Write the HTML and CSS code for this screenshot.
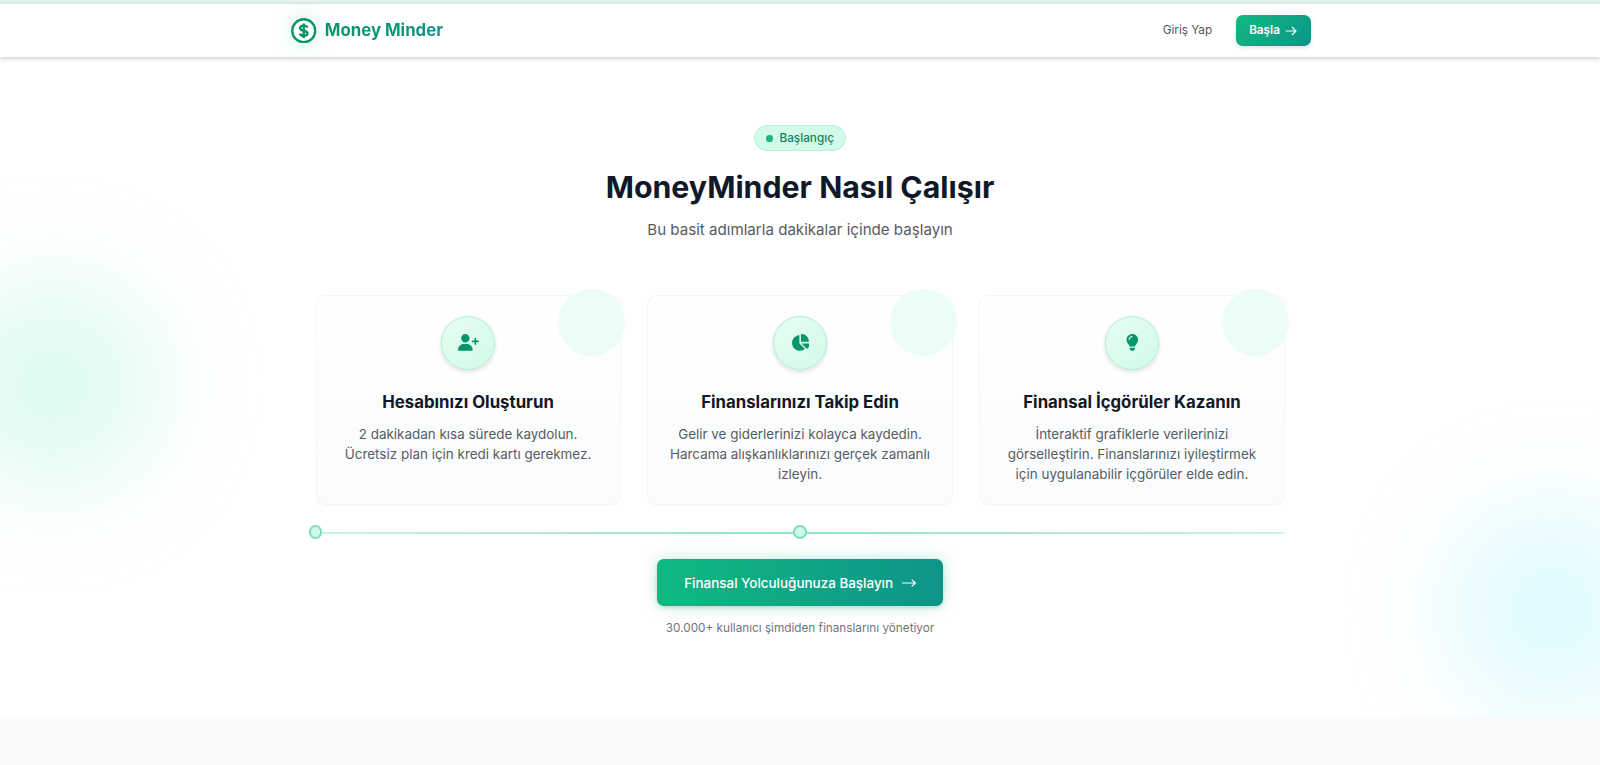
FILE: index.html
```html
<!DOCTYPE html>
<html lang="tr">
<head>
    <meta charset="UTF-8">
    <meta name="viewport" content="width=device-width, initial-scale=1.0">
    <title>Money Minder</title>
    <link rel="stylesheet" href="styles.css">
</head>
<body>
    <div class="top-strip"></div>
    <header class="header">
        <div class="nav">
            <a class="logo" href="#">
                <span class="logo-icon">
                    <svg viewBox="0 0 24 24" fill="none" stroke="currentColor">
                        <circle cx="12" cy="12" r="10.8" stroke-width="2.2"/>
                        <path d="M15.4 9.1c-.4-1.2-1.7-1.9-3.4-1.9-2 0-3.4.9-3.4 2.4 0 3.3 6.9 1.5 6.9 4.8 0 1.5-1.5 2.4-3.5 2.4-1.8 0-3.2-.8-3.6-2.1M12 5.2v13.6" stroke-width="2.3"/>
                    </svg>
                </span>
                <span class="logo-text">Money Minder</span>
            </a>
            <div class="nav-actions">
                <a class="login-link" href="#">Giriş Yap</a>
                <a class="start-button" href="#">Başla
                    <svg viewBox="0 0 14 12" fill="none" stroke="currentColor" stroke-width="1.3" stroke-linecap="round" stroke-linejoin="round"><path d="M1 6h12M8.5 1.5L13 6l-4.5 4.5"/></svg>
                </a>
            </div>
        </div>
    </header>

    <section class="how-section">
        <div class="blob blob-left"></div>
        <div class="blob blob-right"></div>

        <div class="container">
            <span class="badge"><span class="badge-dot"></span>Başlangıç</span>
            <h2>MoneyMinder Nasıl Çalışır</h2>
            <p class="subtitle">Bu basit adımlarla dakikalar içinde başlayın</p>

            <div class="cards">
                <div class="card">
                    <div class="card-icon">
                        <svg viewBox="0 0 640 512"><path d="M96 128a128 128 0 1 1 256 0A128 128 0 1 1 96 128zM0 482.3C0 383.8 79.8 304 178.3 304h91.4C368.2 304 448 383.8 448 482.3c0 16.4-13.3 29.7-29.7 29.7H29.7C13.3 512 0 498.7 0 482.3zM504 312V248H440c-13.3 0-24-10.7-24-24s10.7-24 24-24h64V136c0-13.3 10.7-24 24-24s24 10.7 24 24v64h64c13.3 0 24 10.7 24 24s-10.7 24-24 24H552v64c0 13.3-10.7 24-24 24s-24-10.7-24-24z"/></svg>
                    </div>
                    <h3>Hesabınızı Oluşturun</h3>
                    <p>2 dakikadan kısa sürede kaydolun. Ücretsiz plan için kredi kartı gerekmez.</p>
                </div>
                <div class="card">
                    <div class="card-icon">
                        <svg viewBox="0 0 576 512"><path d="M304 240V16.6c0-9 7-16.6 16-16.6C443.7 0 544 100.3 544 224c0 9-7.6 16-16.6 16H304zM32 272C32 150.7 122.1 50.3 239 34.3c9.2-1.3 17 6.1 17 15.4V288L412.5 444.5c6.7 6.7 6.2 17.7-1.5 23.1C371.8 495.6 323.8 512 272 512C139.5 512 32 404.6 32 272zm526.4 16c9.3 0 16.6 7.8 15.4 17c-7.7 55.9-34.6 105.6-73.9 142.3c-6 5.6-15.4 5.2-21.2-.7L320 288H558.4z"/></svg>
                    </div>
                    <h3>Finanslarınızı Takip Edin</h3>
                    <p>Gelir ve giderlerinizi kolayca kaydedin. Harcama alışkanlıklarınızı gerçek zamanlı izleyin.</p>
                </div>
                <div class="card">
                    <div class="card-icon">
                        <svg viewBox="0 0 384 512"><path d="M272 384c9.6-31.9 29.5-59.1 49.2-86.2l0 0c5.2-7.1 10.4-14.2 15.4-21.4c19.8-28.5 31.4-63 31.4-100.3C368 78.8 289.2 0 192 0S16 78.8 16 176c0 37.3 11.6 71.9 31.4 100.3c5 7.2 10.2 14.3 15.4 21.4l0 0c19.8 27.1 39.7 54.4 49.2 86.2H272zM192 512c44.2 0 80-35.8 80-80V416H112v16c0 44.2 35.8 80 80 80zM112 176c0 8.8-7.2 16-16 16s-16-7.2-16-16c0-61.9 50.1-112 112-112c8.8 0 16 7.2 16 16s-7.2 16-16 16c-44.2 0-80 35.8-80 80z"/></svg>
                    </div>
                    <h3>Finansal İçgörüler Kazanın</h3>
                    <p>İnteraktif grafiklerle verilerinizi görselleştirin. Finanslarınızı iyileştirmek için uygulanabilir içgörüler elde edin.</p>
                </div>
            </div>

            <div class="timeline">
                <span class="timeline-dot"></span>
                <span class="timeline-dot timeline-dot-middle"></span>
            </div>

            <a class="cta-button" href="#">Finansal Yolculuğunuza Başlayın
                <svg viewBox="0 0 14 10" fill="none" stroke="currentColor" stroke-width="1.1" stroke-linecap="round" stroke-linejoin="round"><path d="M.6 5h12.8M10 1.8L13.4 5 10 8.2"/></svg>
            </a>
            <p class="cta-note">30.000+ kullanıcı şimdiden finanslarını yönetiyor</p>
        </div>
    </section>
</body>
</html>
```

FILE: styles.css
```css
* {
    box-sizing: border-box;
    margin: 0;
    padding: 0;
}
html {
    font-size: 13.44px;
}
body {
    font-family: Inter, "Noto Sans", sans-serif;
    line-height: 1.5;
    color: #111827;
    background-color: #f9fafc;
    height: 100vh;
    overflow: hidden;
}
a {
    color: inherit;
    text-decoration: none;
}
.top-strip {
    height: 4px;
    background-color: #e6f7f1;
}
.header {
    position: relative;
    z-index: 2;
    height: 53px;
    background-color: white;
    box-shadow: 0 1px 5px rgba(0, 0, 0, 0.24);
}
.nav {
    max-width: 76rem;
    height: 100%;
    margin: 0 auto;
    display: flex;
    justify-content: space-between;
    align-items: center;
}
.logo {
    display: flex;
    align-items: center;
    gap: 0.6rem;
    padding-left: 2px;
}
.logo-icon {
    display: flex;
    color: #059669;
    border-radius: 50%;
    box-shadow: 0 0 18px 5px rgba(16, 185, 129, 0.1);
}
.logo-icon svg {
    width: 25.5px;
    height: 25.5px;
}
.logo-text {
    font-size: 1.25rem;
    font-weight: 700;
    padding-top: 1px;
    background: linear-gradient(90deg, #059669, #0d9488);
    -webkit-background-clip: text;
    background-clip: text;
    color: transparent;
}
.nav-actions {
    display: flex;
    align-items: center;
    gap: 1.75rem;
    font-size: 0.875rem;
}
.login-link {
    color: #4f565f;
    padding-top: 1px;
}
.start-button {
    display: flex;
    align-items: center;
    gap: 0.4rem;
    height: 2.3rem;
    padding: 1px 1rem 0;
    color: white;
    font-weight: 600;
    border-radius: 0.5rem;
    background: linear-gradient(135deg, #10b981, #0d9488);
    box-shadow: 0 2px 4px rgba(0, 0, 0, 0.12);
}
.start-button svg {
    width: 12px;
    height: 10px;
}
.how-section {
    position: relative;
    overflow: hidden;
    padding: 68px 0 6rem;
    background-color: white;
}
.blob {
    position: absolute;
    width: 16rem;
    height: 16rem;
    border-radius: 50%;
    filter: blur(50px);
}
.blob-left {
    top: 33.33%;
    left: -4rem;
    background-color: #a2f2da;
    opacity: 0.35;
}
.blob-right {
    right: -4.5rem;
    bottom: 0;
    background-color: #a5f3fc;
    opacity: 0.34;
}
.container {
    position: relative;
    max-width: 969px;
    margin: 0 auto;
    display: flex;
    flex-direction: column;
    align-items: center;
    text-align: center;
}
.badge {
    display: flex;
    align-items: center;
    gap: 0.5rem;
    height: 26px;
    padding: 1px 0.8rem 0;
    margin-bottom: 1.5rem;
    font-size: 0.875rem;
    font-weight: 500;
    color: #17805f;
    background-color: #d1fae9;
    border: 1px solid #b4f1da;
    border-radius: 999px;
}
.badge-dot {
    width: 0.5rem;
    height: 0.5rem;
    border-radius: 50%;
    background-color: #17b981;
}
h2 {
    font-size: 2.255rem;
    line-height: 2.5rem;
    font-weight: 700;
    margin-bottom: 1rem;
}
.subtitle {
    font-size: 1.125rem;
    line-height: 1.75rem;
    color: #555c64;
    margin-bottom: 53px;
}
.cards {
    width: 100%;
    display: grid;
    grid-template-columns: repeat(3, 1fr);
    gap: 2rem;
}
.card {
    position: relative;
    padding: 1.5rem;
    border: 1px solid #f3f5f6;
    border-radius: 0.75rem;
    background: linear-gradient(to bottom, white, #f9fbfc);
    box-shadow: 0 1px 2px rgba(0, 0, 0, 0.03);
}
/* pale circle over the top right corner */
.card::after {
    content: "";
    position: absolute;
    top: -0.5rem;
    right: -0.4rem;
    width: 5rem;
    height: 5rem;
    border-radius: 50%;
    background-color: #ebfdf5;
}
.card-icon {
    width: 4rem;
    height: 4rem;
    margin: 0 auto 21px;
    display: flex;
    justify-content: center;
    align-items: center;
    border: 1px solid #b0eed5;
    border-radius: 50%;
    background: linear-gradient(135deg, #e8fdf4, #d1fae7);
    box-shadow: 0 2px 4px rgba(0, 0, 0, 0.12);
}
.card-icon svg {
    height: 1.25rem;
    fill: #059669;
}
h3 {
    font-size: 1.25rem;
    line-height: 1.75rem;
    font-weight: 700;
    margin-bottom: 0.72rem;
}
.card p {
    font-size: 1rem;
    color: #555c64;
}
.timeline {
    position: relative;
    width: 100%;
    height: 2px;
    margin: 1.95rem 0 1.9rem;
    background: linear-gradient(to right, #c9f5e2, #93e2c2, #c9f5e2);
}
.timeline-dot {
    position: absolute;
    top: -6.5px;
    left: 0;
    width: 1rem;
    height: 1rem;
    margin-left: -0.5rem;
    border: 2px solid #7fdfb9;
    border-radius: 50%;
    background-color: #cdf9e5;
}
.timeline-dot-middle {
    left: 50%;
}
.cta-button {
    display: flex;
    align-items: center;
    gap: 0.65rem;
    height: 3.5rem;
    padding: 0 2rem;
    margin-bottom: 1rem;
    color: white;
    font-size: 1rem;
    font-weight: 500;
    border-radius: 0.5rem;
    background: linear-gradient(to right, #10b981, #0d9488);
    box-shadow: 0 2px 4px rgba(0, 0, 0, 0.12), 0 0 16px rgba(16, 185, 129, 0.25);
}
.cta-button svg {
    width: 14px;
    height: 10px;
}
.cta-note {
    font-size: 0.875rem;
    line-height: 1.25rem;
    color: #6f757d;
}
```
